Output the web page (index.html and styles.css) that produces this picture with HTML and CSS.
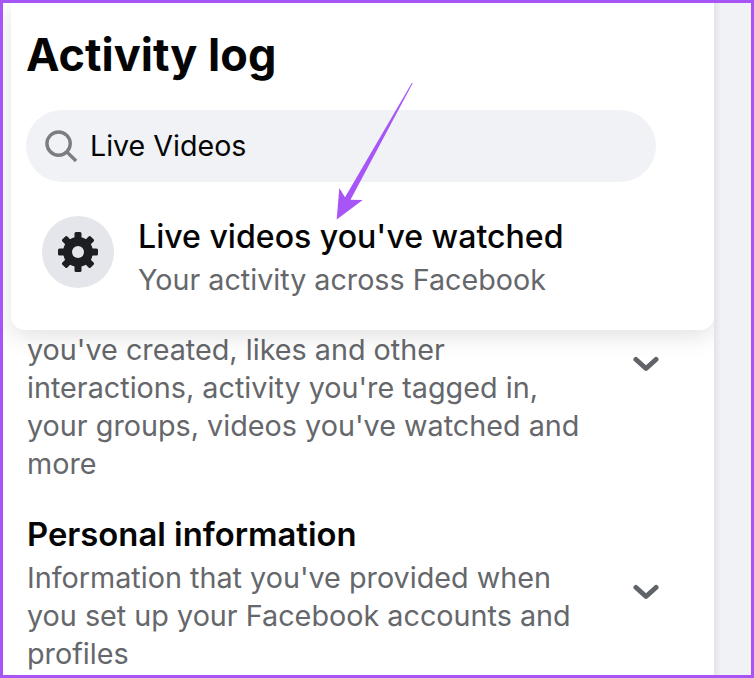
FILE: index.html
```html
<!DOCTYPE html>
<html lang="en">
<head>
<meta charset="utf-8">
<title>Activity log</title>
<link rel="stylesheet" href="styles.css">
</head>
<body>
<div class="frame">
  <main class="panel">
    <section class="section section-first">
      <div class="section-text">
        <p class="desc">you've created, likes and other<br>interactions, activity you're tagged in,<br>your groups, videos you've watched and<br>more</p>
      </div>
      <svg class="chevron" viewBox="0 0 26 16"><path d="M3 3.500 13 12.500 23 3.500"/></svg>
    </section>
    <section class="section section-second">
      <div class="section-text">
        <h2 class="heading">Personal information</h2>
        <p class="desc">Information that you've provided when<br>you set up your Facebook accounts and<br>profiles</p>
      </div>
      <svg class="chevron" viewBox="0 0 26 16"><path d="M3 3.500 13 12.500 23 3.500"/></svg>
    </section>
    <div class="popover">
      <h1 class="title">Activity log</h1>
      <div class="search">
        <svg class="search-icon" viewBox="0 0 34 34"><circle cx="14" cy="14" r="12"/><path d="M22.500 22.500 32 32"/></svg>
        <span class="search-text">Live Videos</span>
      </div>
      <div class="result">
        <div class="result-icon">
          <svg viewBox="0 0 40 40">
            <g class="gear-teeth">
              <rect x="16.500" y="0" width="7" height="40" rx="1.500"/>
              <rect x="16.500" y="0" width="7" height="40" rx="1.500" transform="rotate(45 20 20)"/>
              <rect x="16.500" y="0" width="7" height="40" rx="1.500" transform="rotate(90 20 20)"/>
              <rect x="16.500" y="0" width="7" height="40" rx="1.500" transform="rotate(135 20 20)"/>
              <circle cx="20" cy="20" r="15"/>
            </g>
            <circle class="gear-hole" cx="20" cy="20" r="6"/>
          </svg>
        </div>
        <div class="result-text">
          <div class="result-title">Live videos you've watched</div>
          <div class="result-sub">Your activity across Facebook</div>
        </div>
      </div>
    </div>
  </main>
  <aside class="side"></aside>
  <svg class="arrow" viewBox="0 0 754 678"><path d="M412.800 83 350.500 199.800 362.700 200 336.700 219.500 339.300 188 345 197.300 411.800 83z"/></svg>
</div>
</body>
</html>
```
FILE: styles.css
```css
* { box-sizing: border-box; }
html, body { margin: 0; padding: 0; }
body { font-family: "Inter", "Liberation Sans", sans-serif; background: #fff; }
.frame {
  position: relative;
  width: 754px;
  height: 678px;
  border: 3px solid #a855f7;
  display: flex;
  overflow: hidden;
}
.panel {
  position: relative;
  width: 711px;
  height: 100%;
  background: #fff;
  padding: 328px 0 0 24px;
  flex: none;
  overflow: hidden;
}
.side {
  flex: 1;
  background: #f0f2f5;
  box-shadow: inset 8px 0 6px -6px #dcdde0;
}
.section { display: flex; align-items: flex-start; justify-content: space-between; padding-right: 55px; }
.section-second { margin-top: 32px; }
.section-first .chevron { margin-top: 25px; }
.section-second .chevron { margin-top: 69px; }
.desc { margin: 0; font-size: 28.750px; line-height: 38px; color: #65676b; }
.heading { margin: 0 0 6px; font-size: 32.800px; line-height: 38px; font-weight: 600; color: #050505; }
.chevron { width: 26px; height: 16px; flex: none; }
.chevron path { fill: none; stroke: #606368; stroke-width: 5; stroke-linecap: round; stroke-linejoin: round; }
.popover {
  position: absolute;
  left: 8px;
  top: 0;
  width: 703px;
  height: 327px;
  background: #fff;
  border-radius: 0 0 14px 14px;
  box-shadow: 0 6px 24px rgba(0, 0, 0, 0.12);
  padding: 22px 0 0 15px;
}
.title { margin: 0; font-size: 45px; line-height: 60px; font-weight: 700; color: #050505; }
.search {
  display: flex;
  align-items: center;
  width: 630px;
  height: 72px;
  margin-top: 25px;
  padding-left: 19px;
  border-radius: 36px;
  background: #f0f2f5;
}
.search-icon { width: 33px; height: 33px; flex: none; }
.search-icon circle, .search-icon path { fill: none; stroke: #7b7d81; stroke-width: 3.500; }
.search-text { margin: 0 0 2px 12px; font-size: 28.600px; color: #050505; }
.result { display: flex; align-items: flex-start; margin-top: 34px; padding-left: 16px; }
.result-icon {
  width: 72px;
  height: 72px;
  border-radius: 50%;
  background: #e4e6eb;
  display: flex;
  align-items: center;
  justify-content: center;
  flex: none;
}
.result-icon svg { width: 40px; height: 40px; }
.gear-teeth { fill: #1c1e21; }
.gear-hole { fill: #e4e6eb; }
.result-text { margin-left: 24px; padding-top: 1px; }
.result-title { font-size: 32.100px; line-height: 40px; font-weight: 500; color: #050505; }
.result-sub { font-size: 28.700px; line-height: 46px; color: #65676b; }
.arrow { position: absolute; left: -3px; top: -3px; width: 754px; height: 678px; pointer-events: none; }
.arrow path { fill: #a855f7; }
```
